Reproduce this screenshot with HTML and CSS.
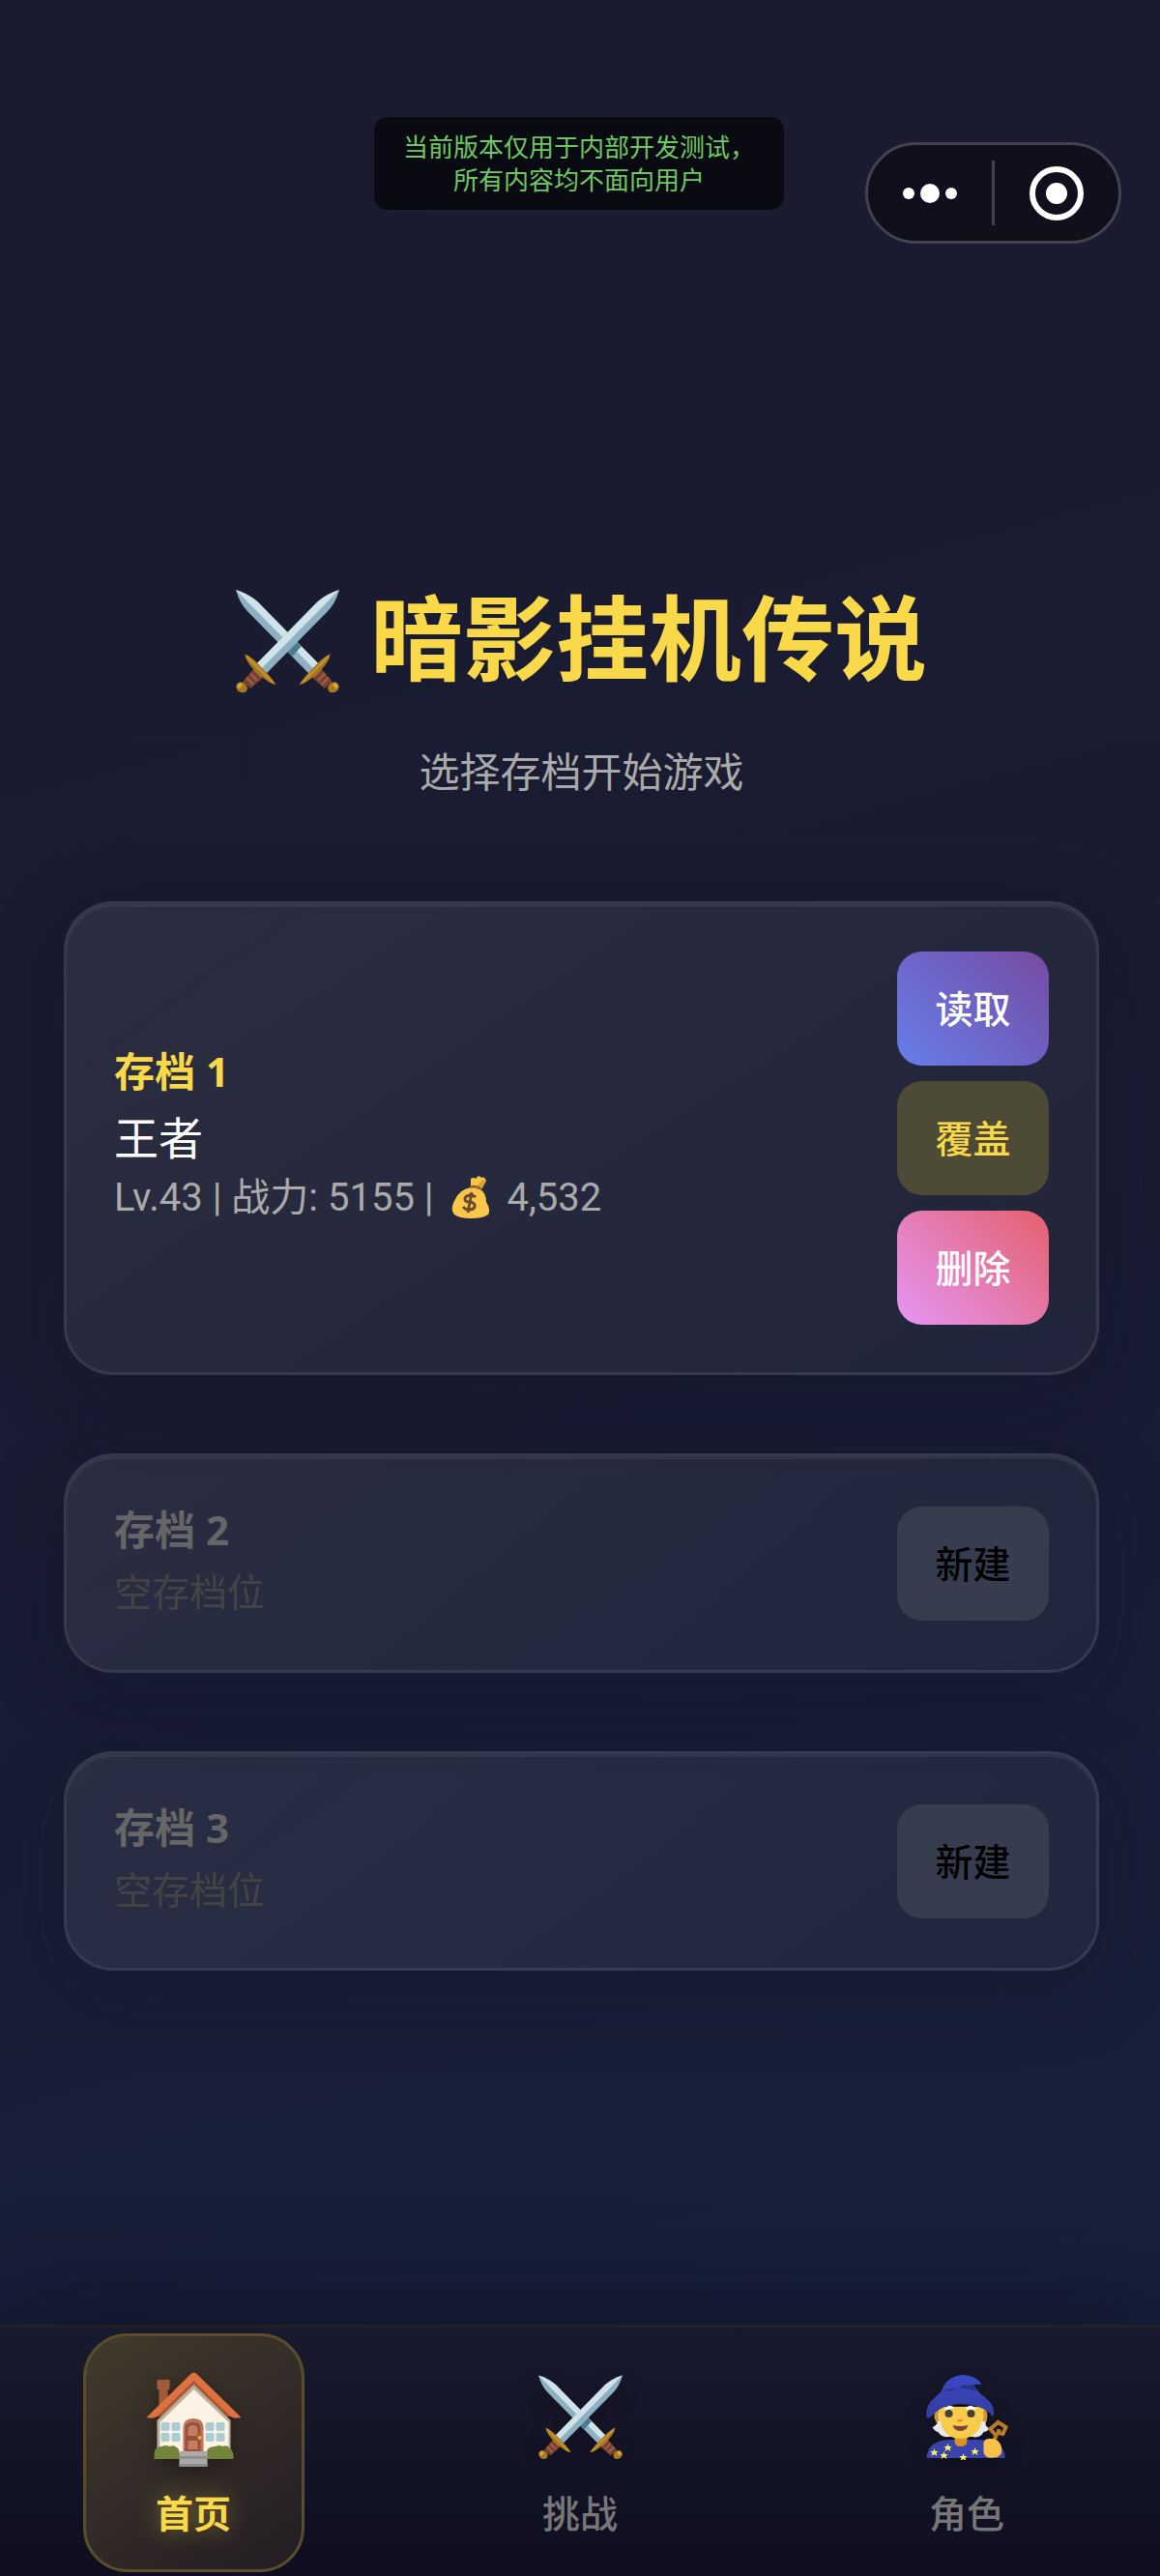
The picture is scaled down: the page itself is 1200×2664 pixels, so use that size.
FILE: index.html
```html
<!DOCTYPE html>
<html lang="zh-CN">
<head>
    <meta charset="UTF-8">
    <meta name="viewport" content="width=device-width, initial-scale=1.0">
    <title>暗影挂机传说</title>
    <link rel="stylesheet" href="styles.css">
</head>
<body>
    <!-- 图标定义 -->
    <svg class="icon-defs" aria-hidden="true">
        <defs>
            <linearGradient id="hat" x1="0" y1="0" x2="0" y2="1">
                <stop offset="0" stop-color="#3f48c8"/>
                <stop offset="1" stop-color="#303c9c"/>
            </linearGradient>
            <!-- 单把剑，从左下到右上 -->
            <g id="sword">
                <path d="M21 76 L84 12 Q93 4 106 0 Q102 14 94 22 L31 86 Z" fill="#8fb0c2"/>
                <path d="M21 76 L84 12 Q93 4 106 0 L26 81 Z" fill="#cfe3e9"/>
                <path d="M19 80 L29 89 L15 101 L7 94 Z" fill="#76432f"/>
                <path d="M19 82 L26 89 M15 86 L22 93 M11 90 L18 97" stroke="#a5604b" stroke-width="2"/>
                <path d="M9 66 Q14 67 24 77 Q37 90 41 97 Q37 98 24 87 Q11 76 9 66 Z" fill="#a87a1f"/>
                <path d="M11 68 L38 95" stroke="#c99431" stroke-width="2"/>
                <ellipse cx="6" cy="100" rx="6" ry="5" fill="#a87a1f" transform="rotate(35 6 100)"/>
                <ellipse cx="4" cy="98" rx="2" ry="3" fill="#dba93c" transform="rotate(35 4 98)"/>
            </g>
            <symbol id="swords" viewBox="0 0 106 106">
                <use href="#sword" transform="translate(106 0) scale(-1 1)"/>
                <path d="M53 63 L62 53 L67 58 L58 68 Z" fill="#467c8e"/>
                <use href="#sword"/>
            </symbol>
            <symbol id="house" viewBox="0 0 98 98">
                <path d="M11 8 H24 V18 H22 V42 H13 V18 H11 Z" fill="#a15b3a"/>
                <path d="M11 50 L49 12 L87 50 V84 H11 Z" fill="#bcae9c"/>
                <path d="M14 52 L49 18 L85 52 V84 H14 Z" fill="#fdf3e4"/>
                <path d="M0 47 L46 2 Q49 -1 52 2 L98 47 Q91 49 87 46 L49 11 L11 46 Q7 49 0 47 Z" fill="#dd713f"/>
                <path d="M11 46 L49 9 L87 46 L83 46 L49 13 L15 46 Z" fill="#a85836"/>
                <g fill="#abccd5">
                    <rect x="15" y="52" width="9" height="9" rx="2"/><rect x="26" y="52" width="9" height="9" rx="2"/>
                    <rect x="15" y="63" width="9" height="9" rx="2"/><rect x="26" y="63" width="9" height="9" rx="2"/>
                    <rect x="61" y="52" width="9" height="9" rx="2"/><rect x="72" y="52" width="9" height="9" rx="2"/>
                    <rect x="61" y="63" width="9" height="9" rx="2"/><rect x="72" y="63" width="9" height="9" rx="2"/>
                </g>
                <path d="M38 84 V58 Q38 48 48 48 Q59 48 59 58 V84 Z" fill="#bf735a"/>
                <path d="M40 84 V59 Q40 52 48 52 Q56 52 56 59 V84 Z" fill="#9b5039"/>
                <path d="M43 66 V60 Q43 55 48 55 Q53 55 53 60 V66 Z M43 71 H53 V80 H43 Z" fill="#c47b62"/>
                <circle cx="55" cy="68" r="2" fill="#f3ae35"/>
                <path d="M8 90 V85 Q8 77 16 77 Q20 75 24 77 Q29 75 31 78 Q34 79 34 84 V90 Z M62 90 V83 Q63 77 71 77 Q75 75 79 77 Q84 75 86 79 Q90 81 90 87 V90 Z" fill="#75843b"/>
                <path d="M34 82 H63 V98 H34 Z" fill="#aaa"/>
                <path d="M34 87 H63 V90 H34 Z M34 95 H63 V98 H34 Z" fill="#8f8f8f"/>
            </symbol>
            <symbol id="mage" viewBox="0 0 86 88">
                <path d="M15 34 Q8 42 12 50 Q9 54 7 54 Q10 59 13 59 Q16 65 24 64 L48 64 Q57 66 60 59 Q64 59 66 55 Q62 54 62 50 Q66 42 60 34 Z" fill="#e8e8e8"/>
                <path d="M1 86 Q2 68 25 67 L48 67 Q83 66 82 86 Z" fill="#3844ac"/>
                <path d="M30 62 H43 V68 Q43 74 36 74 Q30 74 30 68 Z" fill="#d99223"/>
                <path d="M13 36 Q9 43 13 48 M60 36 Q64 43 60 48" stroke="#d99223" stroke-width="4" fill="none"/>
                <path d="M14 33 Q13 66 36 66 Q60 66 60 33 Z" fill="#f8cc4a"/>
                <path d="M1 44 Q-1 32 10 23 Q15 19 17 16 Q21 2 38 0 Q52 0 58 10 L50 10 Q53 17 61 23 Q73 32 70 42 Q68 44 67 40 Q55 30 36 30 Q16 31 7 42 Q3 46 1 44 Z" fill="url(#hat)"/>
                <path d="M17 17 Q34 10 53 17 L50 10 Q42 12 40 10 Q28 18 17 17 Z" fill="#283481"/>
                <path d="M20 35 Q25 30 29 34 Q25 34 21 37 Z M42 34 Q48 30 52 36 Q47 34 43 36 Z" fill="#fff" stroke="#fff"/>
                <circle cx="24" cy="40" r="4" fill="#463e34"/><circle cx="47" cy="40" r="4" fill="#463e34"/>
                <path d="M32 46 H39 Q38 49 36 49 Q33 49 32 46 Z" fill="#e19325"/>
                <path d="M28 52 Q36 54 44 52 Q42 58 36 58 Q30 58 28 52 Z" fill="#7a4536"/>
                <path d="M70 70 L73 63 L67 56 L75 49 L83 54 L80 61 L75 60 L76 56" fill="none" stroke="#b97b25" stroke-width="4"/>
                <path d="M60 70 Q61 66 66 66 Q75 65 78 73 Q81 82 74 85 Q62 88 60 80 Z" fill="#f8c148"/>
                <g fill="#fdf45c">
                    <path id="star" d="M9 76 L10 79 L13 79 L11 81 L12 84 L9 82 L6 84 L7 81 L5 79 L8 79 Z"/>
                    <use href="#star" x="14" y="-5"/><use href="#star" x="42" y="-1"/>
                    <use href="#star" x="10" y="3"/><use href="#star" x="30" y="5"/>
                </g>
            </symbol>
            <symbol id="money" viewBox="0 0 40 44">
                <path d="M20 12 L20 3 Q23 1 25 3 Q28 -2 31 2 Q34 0 36 5 L31 14 Z" fill="#f6c644"/>
                <path d="M27 10 L32 4 L36 5 L31 14 Z" fill="#d99f2f"/>
                <path d="M20 12 Q9 14 4 24 Q-2 35 3 40 Q8 44 20 44 Q33 44 38 40 Q41 35 36 27 Q36 18 30 14 Z" fill="#fac74b"/>
                <path d="M19 12 Q25 9 31 14" stroke="#8d6030" stroke-width="2" fill="none"/>
                <path d="M25 22 Q23 20 19 20 Q14 21 14 24 Q14 27 19 27 Q25 28 24 32 Q23 35 18 35 Q14 35 12 32 M21 17 L17 38" stroke="#6b4a2c" stroke-width="3" fill="none"/>
            </symbol>
        </defs>
    </svg>

    <div class="app">
        <!-- 顶部提示与胶囊按钮 -->
        <header class="top-bar">
            <p class="notice">当前版本仅用于内部开发测试，<br>所有内容均不面向用户</p>
            <div class="capsule">
                <button class="capsule-btn" aria-label="更多">
                    <svg width="56" height="56" viewBox="0 0 56 56" fill="#fff">
                        <circle cx="6" cy="28" r="6"/>
                        <circle cx="28" cy="28" r="10"/>
                        <circle cx="50" cy="28" r="6"/>
                    </svg>
                </button>
                <button class="capsule-btn" aria-label="关闭">
                    <svg width="56" height="56" viewBox="0 0 56 56">
                        <circle cx="28" cy="28" r="25" fill="none" stroke="#fff" stroke-width="6"/>
                        <circle cx="28" cy="28" r="11" fill="#fff"/>
                    </svg>
                </button>
            </div>
        </header>

        <!-- 存档列表 -->
        <main class="main-container">
            <h1 class="title"><svg class="title-icon" aria-hidden="true"><use href="#swords"/></svg>暗影挂机传说</h1>
            <p class="subtitle">选择存档开始游戏</p>

            <section class="slot">
                <div class="slot-info">
                    <h2 class="slot-name">存档 1</h2>
                    <p class="player-name">王者</p>
                    <p class="player-stats">Lv.43 | 战力: 5155 | <svg class="money-icon" aria-hidden="true"><use href="#money"/></svg> 4,532</p>
                </div>
                <div class="slot-actions">
                    <button class="btn btn-load">读取</button>
                    <button class="btn btn-cover">覆盖</button>
                    <button class="btn btn-delete">删除</button>
                </div>
            </section>

            <section class="slot empty">
                <div class="slot-info">
                    <h2 class="slot-name">存档 2</h2>
                    <p class="slot-empty">空存档位</p>
                </div>
                <div class="slot-actions">
                    <button class="btn btn-new">新建</button>
                </div>
            </section>

            <section class="slot empty">
                <div class="slot-info">
                    <h2 class="slot-name">存档 3</h2>
                    <p class="slot-empty">空存档位</p>
                </div>
                <div class="slot-actions">
                    <button class="btn btn-new">新建</button>
                </div>
            </section>
        </main>

        <!-- 底部导航 -->
        <nav class="tab-bar">
            <a class="tab active" href="#home">
                <svg class="tab-icon" aria-hidden="true"><use href="#house"/></svg>
                <span>首页</span>
            </a>
            <a class="tab" href="#battle">
                <svg class="tab-icon" aria-hidden="true"><use href="#swords"/></svg>
                <span>挑战</span>
            </a>
            <a class="tab" href="#role">
                <svg class="tab-icon" aria-hidden="true"><use href="#mage"/></svg>
                <span>角色</span>
            </a>
        </nav>
    </div>
</body>
</html>
```
FILE: styles.css
```css
* {
    box-sizing: border-box;
}

body {
    margin: 0;
    font-family: "Noto Sans CJK SC", sans-serif;
    color: #fff;
    background-color: #1a1a2e;
}

h1, h2, p {
    margin: 0;
}

button {
    font-family: inherit;
    border: none;
    cursor: pointer;
}

.icon-defs {
    display: block;
    width: 0;
    height: 0;
}

.app {
    min-height: 100vh;
    display: flex;
    flex-direction: column;
    background: linear-gradient(165deg, #1b1b2f 0%, #191c32 50%, #17213d 100%);
}

/* 顶部 */
.top-bar {
    display: grid;
    grid-template-columns: 1fr auto 1fr;
    align-items: start;
    padding: 121px 40px 0 38px;
}

.notice {
    grid-column: 2;
    padding: 13px 30px 15px;
    border-radius: 14px;
    background-color: #0a0b12;
    color: #6fc864;
    font-size: 26px;
    line-height: 34px;
    text-align: center;
}

.capsule {
    justify-self: end;
    display: flex;
    width: 265px;
    height: 105px;
    margin-top: 26px;
    padding: 16px 0;
    border: 3px solid #42434f;
    border-radius: 53px;
    background-color: #0f101c;
}

.capsule-btn {
    flex: 1;
    display: flex;
    align-items: center;
    justify-content: center;
    padding: 0;
    background: transparent;
}

.capsule-btn + .capsule-btn {
    border-left: 3px solid #42434f;
}

/* 主内容 */
.main-container {
    flex: 1;
    padding: 331px 63px 81px 66px;
}

.title {
    display: flex;
    align-items: center;
    justify-content: center;
    gap: 32px;
    color: #f9d949;
    font-size: 96px;
    line-height: 144px;
    font-weight: 700;
}

.title-icon {
    width: 107px;
    height: 107px;
    margin-top: 16px;
}

.subtitle {
    margin: 38px 0 105px;
    color: #aaa;
    font-size: 42px;
    line-height: 62px;
    text-align: center;
}

/* 存档卡片 */
.slot {
    display: flex;
    align-items: center;
    justify-content: space-between;
    margin-bottom: 81px;
    padding: 49px;
    border: 3px solid rgba(255, 255, 255, 0.13);
    border-radius: 51px;
    background: linear-gradient(145deg, rgba(255, 255, 255, 0.08), rgba(255, 255, 255, 0.04));
    background-clip: padding-box;
    box-shadow: 0 20px 80px rgba(10, 14, 30, 0.25), inset 0 3px 0 rgba(255, 255, 255, 0.06);
}

.slot-info {
    padding-bottom: 9px;
}

.slot-name {
    color: #f9d949;
    font-family: "Noto Sans", "Noto Sans CJK SC", sans-serif;
    font-size: 42px;
    line-height: 64px;
}

.player-name {
    font-size: 46px;
    line-height: 68px;
}

.player-stats {
    color: #aaa;
    font-family: Roboto, "Noto Sans CJK SC", sans-serif;
    font-size: 40px;
    line-height: 62px;
}

.money-icon {
    width: 40px;
    height: 44px;
    margin: 0 8px;
    vertical-align: -8px;
}

.slot-actions {
    display: flex;
    flex-direction: column;
    gap: 16px;
}

.btn {
    width: 157px;
    height: 118px;
    padding: 0 0 4px;
    border-radius: 26px;
    color: #fff;
    font-size: 39px;
    font-weight: 500;
}

.btn-load {
    background: linear-gradient(45deg, #667eea, #764ba2);
}

.btn-cover {
    background-color: #4d4a35;
    color: #f9d949;
}

.btn-delete {
    background: linear-gradient(45deg, #e496f5, #e5606c);
}

.btn-new {
    background-color: #373c4f;
    color: #000;
}

.slot.empty {
    padding: 44px 49px;
}

.empty .slot-name {
    color: #666;
}

.slot-empty {
    color: #444;
    font-size: 39px;
    line-height: 60px;
}

/* 底部导航 */
.tab-bar {
    display: flex;
    justify-content: space-around;
    padding: 6px 0 4px;
    border-top: 3px solid #222129;
    background: linear-gradient(#1a1a2e, #0e0e20);
    box-shadow: 0 -10px 100px rgba(10, 12, 30, 0.6);
}

.tab {
    display: flex;
    flex-direction: column;
    align-items: center;
    justify-content: flex-end;
    gap: 24px;
    width: 229px;
    height: 247px;
    padding-bottom: 31px;
    border: 3px solid transparent;
    border-radius: 46px;
    color: #777;
    font-size: 39px;
    line-height: 58px;
    font-weight: 500;
    text-decoration: none;
}

.tab-icon {
    width: 87px;
    height: 88px;
    filter: drop-shadow(0 5px 10px rgba(0, 0, 0, 0.3));
}

.tab.active {
    gap: 17px;
    border-color: #594d2d;
    background: linear-gradient(145deg, #433b2b, #231c24);
    color: #f9d949;
    font-weight: 700;
    text-shadow: 0 0 24px rgba(249, 217, 73, 0.4);
}

.active .tab-icon {
    width: 99px;
    height: 98px;
}
```
